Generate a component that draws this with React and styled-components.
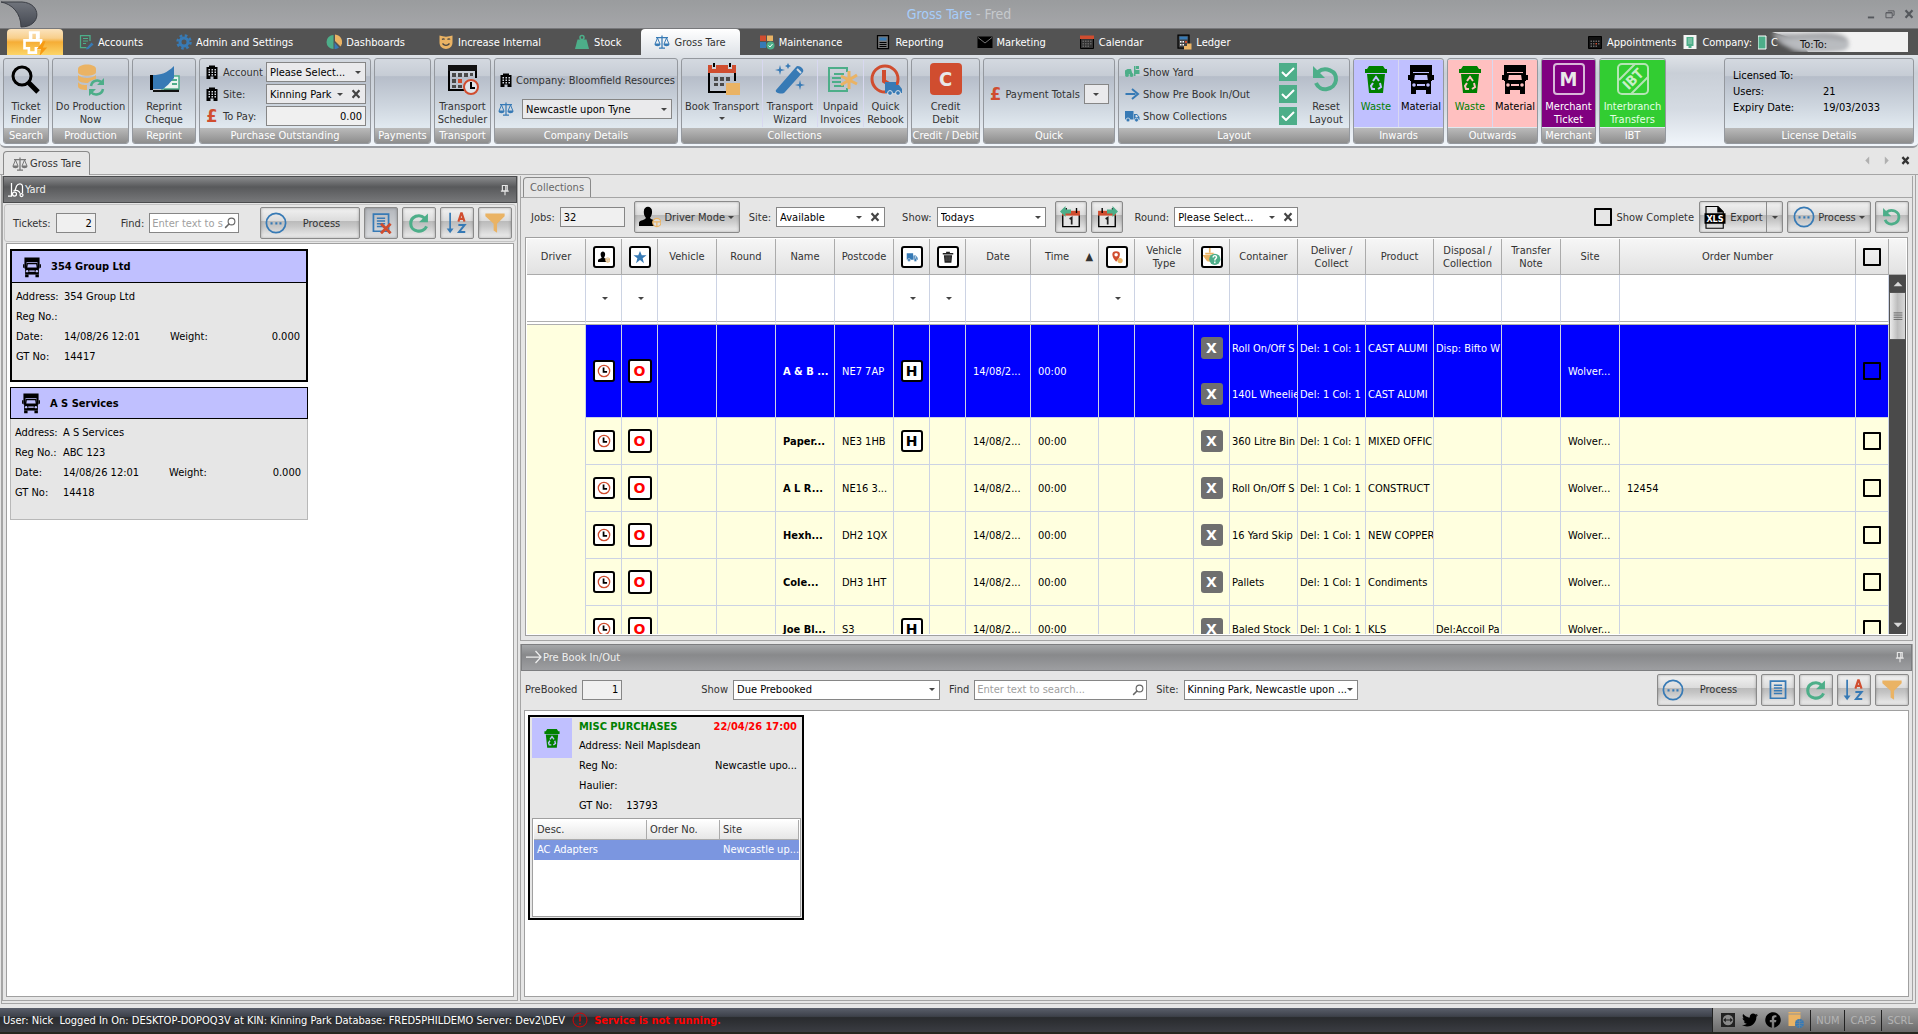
import { useId } from 'react';
import styled, { createGlobalStyle, css } from 'styled-components';
import { FaFacebook, FaTwitter } from 'react-icons/fa';

const BLUE = '#377ab5';
const GREEN = '#4dae89';
const RED = '#d04d2f';
const AMBER = '#eab364';

/* ---------- icons ---------- */

function Svg({ size = 16, box = 32, children }) {
  return (
    <svg width={size} height={size} viewBox={`0 0 ${box} ${box}`} fill='none' aria-hidden='true'>
      {children}
    </svg>
  );
}

const SearchIcon = () => (
  <Svg size={32}>
    <circle cx='12' cy='13' r='9' stroke='#000' strokeWidth='3' />
    <path d='M18 19l10 10' stroke='#000' strokeWidth='5' />
  </Svg>
);

const LensIcon = () => (
  <Svg size={12}>
    <circle cx='20' cy='12' r='9' stroke='#666' strokeWidth='3' />
    <path d='M14 18L3 29' stroke='#666' strokeWidth='4' />
  </Svg>
);

const DatabaseIcon = () => (
  <Svg size={32}>
    <path d='M3 6c0-6 18-6 18 0v3c0 5-18 5-18 0z' fill={AMBER} />
    <path d='M3 12c4 4 14 4 18 0v4c-4 1-7 2-8 4-5 0-10-1-10-4z' fill={AMBER} />
    <path d='M3 19c2 3 6 3 9 3v5c-5 0-9-1-9-4z' fill={AMBER} />
    <path d='M16 23c1-6 8-7 11-3M28 26c-1 6-9 7-12 3' stroke={GREEN} strokeWidth='2.5' />
    <path d='M29 15v7h-7zM14 33v-7h7z' fill={GREEN} />
  </Svg>
);

const ChequeIcon = () => (
  <Svg size={32}>
    <path d='M2 12h3v15H2z' fill='#000' />
    <path d='M5 27h11v-3l3-3h12v8H5z' fill='#111' />
    <path d='M17 13h14v13H14z' fill='#e8f4ee' stroke={GREEN} strokeWidth='1.5' />
    <path d='M21 17h8M24 21h5' stroke={GREEN} strokeWidth='2' />
    <path d='M5 12c8 0 14-2 21-9v12c-5 6-7 8-11 11H5z' fill={BLUE} />
  </Svg>
);

const BuildingIcon = () => (
  <Svg>
    <path d='M10 3h12v3h5v24h-8v-5h-6v5H5V6h5z' fill='#000' />
    <path d='M9 10h3v3H9zM15 10h3v3h-3zM21 10h3v3h-3zM9 15h3v3H9zM15 15h3v3h-3zM21 15h3v3h-3zM9 20h3v3H9zM15 20h3v3h-3zM21 20h3v3h-3z' fill='#d5dae2' />
  </Svg>
);

const SchedulerIcon = () => (
  <Svg size={32}>
    <path d='M29 15V5M2 3v24h15' stroke='#000' strokeWidth='2' />
    <path d='M1 2h29v6H1z' fill='#111' />
    <path d='M5 10h4v4H5zM11 10h4v4h-4zM17 10h4v4h-4zM23 10h3v3h-3zM5 16h4v4H5zM5 22h4v3H5zM11 22h4v3h-4z' fill='#4a4a4a' />
    <path d='M11 16h4v4h-4z' fill={RED} />
    <circle cx='24' cy='24' r='7' fill='#dfe4ea' stroke={RED} strokeWidth='2' />
    <path d='M24 19v6h4' stroke='#000' strokeWidth='2' />
  </Svg>
);

const ScalesIcon = ({ color = BLUE }) => (
  <Svg>
    <path d='M16 3v24M10 28h12M4 7h24' stroke={color} strokeWidth='2.5' />
    <path d='M7 8L2 20h10zM25 8l-5 12h10z' stroke={color} strokeWidth='2' />
    <path d='M1 20h12c0 6-12 6-12 0zM19 20h12c0 6-12 6-12 0z' fill={color} />
  </Svg>
);

const BookIcon = () => (
  <Svg size={32}>
    <path d='M3 10v19h17M29 10v8' stroke='#000' strokeWidth='2' />
    <path d='M2 2h4v4h4V2h12v4h4V2h4v8H2z' fill={RED} />
    <path d='M7 0h2v4H7zM23 0h2v4h-2z' fill='#000' />
    <path d='M8 14h4v4H8zM14 14h4v4h-4zM20 14h4v4h-4zM8 20h4v3H8zM14 20h4v3h-4z' fill='#4a4a4a' />
    <path d='M20 20h14v12H20z' fill={AMBER} />
  </Svg>
);

const WandIcon = () => (
  <Svg size={32}>
    <path d='M2 27L22 4c2-3 9 2 7 5L11 29c-2 3-11 1-9-2z' fill={BLUE} />
    <path d='M23 6l4 4' stroke='#d6dbe2' strokeWidth='2' />
    <path d='M6 2l1 4 4 1-4 1-1 4-1-4-4-1 4-1zM14 0l1 2 2 1-2 1-1 2-1-2-2-1 2-1zM26 17l1 4 4 1-4 1-1 4-1-4-4-1 4-1z' fill={BLUE} />
  </Svg>
);

const InvoiceIcon = () => (
  <Svg size={32}>
    <path d='M22 9V5H4v23h18v-3' stroke={GREEN} strokeWidth='2' />
    <path d='M9 11h10M7 15h9M7 19h9M9 23h10' stroke={GREEN} strokeWidth='2' />
    <path d='M24 8v18M16 13l16 8M32 12l-16 10' stroke={AMBER} strokeWidth='3' />
  </Svg>
);

const RebookIcon = () => (
  <Svg size={32}>
    <circle cx='15' cy='16' r='13' stroke={RED} strokeWidth='3' />
    <path d='M14 7v11l5 3' stroke={RED} strokeWidth='4' />
    <path d='M15 19h11v3h3l3 4v4H15z' fill={BLUE} />
    <circle cx='20' cy='30' r='2.4' fill={BLUE} stroke='#dfe4ea' />
    <circle cx='28' cy='30' r='2.4' fill={BLUE} stroke='#dfe4ea' />
  </Svg>
);

const ForkliftIcon = () => (
  <Svg>
    <path d='M2 20v-7l5-3h7l3 10zM20 4v20h3V4zM23 12h8v8h-8zM24 4h6v6h-6z' fill={GREEN} />
    <circle cx='6' cy='22' r='4' fill={GREEN} />
    <circle cx='15' cy='22' r='4' fill={GREEN} />
  </Svg>
);

const YardIcon = () => (
  <Svg>
    <path d='M7 2v26H0M14 17l3-9c3-5 11-6 12 0v14M11 18c5-3 12-1 13 5' stroke='#fff' strokeWidth='2.5' />
    <circle cx='13' cy='24' r='4' stroke='#fff' strokeWidth='2.5' />
    <circle cx='27' cy='26' r='3' stroke='#fff' strokeWidth='2.5' />
  </Svg>
);

const ArrowIcon = () => (
  <Svg>
    <path d='M3 16h20' stroke={BLUE} strokeWidth='4' />
    <path d='M16 6l12 10-12 10' stroke={BLUE} strokeWidth='4' />
  </Svg>
);

const ThinArrowIcon = () => (
  <Svg>
    <path d='M0 16h30M19 4l11 12-11 12' stroke='#eee' strokeWidth='2.5' />
  </Svg>
);

const TruckIcon = ({ size = 16 }) => (
  <Svg size={size}>
    <path d='M2 6h17v17H2zM20 12h6l5 6v6H20z' fill={BLUE} />
    <path d='M23 14h3l2 4h-5z' fill='#dfe4ea' />
    <circle cx='8' cy='24' r='4' fill={BLUE} stroke='#e6e9ee' strokeWidth='1.5' />
    <circle cx='25' cy='24' r='4' fill={BLUE} stroke='#e6e9ee' strokeWidth='1.5' />
  </Svg>
);

const LorryFront = ({ size = 32, bg = '#c0c0ff' }) => (
  <Svg size={size}>
    <path d='M5 2h22v7H5zM5 2h3v16H5zM24 2h3v16h-3z' fill='#000' />
    <path d='M9 11h14l1 7H8z' stroke='#000' strokeWidth='2' />
    <path d='M6 17h20v10H6z' fill='#000' />
    <path d='M12 21h8v2h-8z' fill={bg} />
    <circle cx='9' cy='22' r='1.8' fill={bg} />
    <circle cx='23' cy='22' r='1.8' fill={bg} />
    <path d='M6 27h5v4H6zM21 27h5v4h-5zM3 12h2v5H3zM27 12h2v5h-2z' fill='#000' />
  </Svg>
);

const BinIcon = ({ size = 32, bg = '#c0c0ff' }) => (
  <Svg size={size}>
    <path d='M9 3h14l2 3H7zM5 6h22v4H5zM7 11h18l-2 19H9z' fill='#008000' />
    <path d='M13 18l3-4 3 4M20 20l1 4-3 2M15 26h-3l-1-3 2-3' stroke={bg} strokeWidth='2' />
  </Svg>
);

const ResetIcon = ({ size = 32 }) => (
  <Svg size={size}>
    <path d='M8 9c7-6 19-1 18 8-1 10-16 13-20 3' stroke={GREEN} strokeWidth='4' />
    <path d='M3 3v12h12z' fill={GREEN} />
  </Svg>
);

const RefreshIcon = () => (
  <Svg size={22}>
    <path d='M24 9C17 2 4 6 4 17c0 12 18 15 23 4' stroke={GREEN} strokeWidth='4.5' />
    <path d='M29 2v13H16z' fill={GREEN} />
  </Svg>
);

const DotsIcon = () => (
  <Svg size={22}>
    <circle cx='16' cy='16' r='14' stroke={BLUE} strokeWidth='2.5' />
    <path d='M8 15h3v3H8zM15 15h3v3h-3zM21 15h3v3h-3z' fill={BLUE} />
  </Svg>
);

const ListIcon = ({ crossed }) => (
  <Svg size={22}>
    <path d='M5 3h22v25H5z' stroke={BLUE} strokeWidth='2.5' />
    <path d='M10 9h12M10 13h12M10 17h12M10 21h12' stroke={BLUE} strokeWidth='2' />
    {crossed && <path d='M16 17l14 14M30 17L16 31' stroke={RED} strokeWidth='4' />}
  </Svg>
);

const SortIcon = () => (
  <Svg size={22}>
    <path d='M6 1v26' stroke={BLUE} strokeWidth='2.5' />
    <path d='M1 24h10l-5 7z' fill={BLUE} />
    <path d='M18 14l4-12h1l4 12M19 10h7' stroke={RED} strokeWidth='3' />
    <path d='M18 19h9l-8 10h9' stroke={BLUE} strokeWidth='3' />
  </Svg>
);

const FunnelIcon = () => (
  <Svg size={22}>
    <path d='M2 2h28v4L19 17v13l-5-3V17L2 6z' fill={AMBER} />
  </Svg>
);

const DriverIcon = ({ size = 22 }) => (
  <Svg size={size}>
    <path d='M7 8c0-9 12-9 12 0 0 4-1 7-3 9 1 3 8 3 9 6v6H0v-5c1-4 9-3 10-7-2-2-3-5-3-8z' fill='#000' />
    <circle cx='26' cy='24' r='6' fill='#ddd' stroke={AMBER} strokeWidth='1.8' />
    <path d='M20 23h12M26 24v6' stroke={AMBER} strokeWidth='1.8' />
  </Svg>
);

const DayIcon = ({ forward }) => (
  <Svg size={22}>
    <path d='M4 12v18h24V12' stroke='#000' strokeWidth='2' fill='#e4e4e4' />
    <path d='M3 7h26v7H3z' fill={RED} />
    <path d='M8 3h2v7H8zM23 3h2v7h-2z' fill='#000' />
    <path d='M14 19l3-2v10' stroke='#222' strokeWidth='2.5' />
    <path d={forward ? 'M16 5h8V0l8 8-8 8v-5h-8z' : 'M16 5H8V0L0 8l8 8v-5h8z'} fill={GREEN} />
  </Svg>
);

const XlsIcon = () => (
  <Svg size={24}>
    <path d='M4 2h16l7 7v22H4z' stroke='#000' strokeWidth='1.5' />
    <path d='M19 1v9h9zM2 11h28v14H2z' fill='#000' />
    <text x='16' y='23' fill='#fff' fontSize='12' fontWeight='700' textAnchor='middle'>XLS</text>
  </Svg>
);

const ClockIcon = () => (
  <Svg size={14}>
    <circle cx='16' cy='16' r='13' stroke={RED} strokeWidth='3' />
    <path d='M15 8v10h8' stroke='#000' strokeWidth='4' />
  </Svg>
);

const StarIcon = () => (
  <Svg size={14}>
    <path d='M16 2l4 10h11l-9 7 3 11-9-7-9 7 3-11-9-7h11z' fill={BLUE} />
  </Svg>
);

const TrashIcon = () => (
  <Svg size={12}>
    <path d='M2 5h9V2h10v3h9v4H2zM5 11h22l-2 20H7z' fill='#222' />
    <path d='M11 14v13M16 14v13M21 14v13' stroke='#666' strokeWidth='2' />
  </Svg>
);

const PinMapIcon = () => (
  <Svg size={14}>
    <path d='M14 3c-12 0-11 12 0 24C25 15 26 3 14 3z' fill={RED} />
    <circle cx='14' cy='11' r='4' fill='#fff' />
    <circle cx='23' cy='24' r='6' fill={AMBER} />
  </Svg>
);

const QueryIcon = () => (
  <Svg size={18}>
    <path d='M12 0v8M4 10h15M2 14h17v10L8 22z' stroke={AMBER} strokeWidth='3' fill={AMBER} />
    <circle cx='21' cy='20' r='10' fill={GREEN} />
    <path d='M18 17c0-5 7-4 6 0-1 2-3 2-3 5M21 24v3' stroke='#fff' strokeWidth='2.5' />
  </Svg>
);

const PushPinIcon = () => (
  <Svg size={12}>
    <path d='M9 4h13v14H9zM5 19h21M16 19v11M18 4v14' stroke='#e6e6e6' strokeWidth='3' />
  </Svg>
);

const AccountsIcon = () => (
  <Svg>
    <path d='M24 14V3H5v24h12' stroke={GREEN} strokeWidth='2.5' />
    <path d='M10 9h10M10 14h10M10 19h6' stroke={GREEN} strokeWidth='2' />
    <path d='M17 28l10-11 4 4-10 9-5 1z' fill={BLUE} />
  </Svg>
);

const GearIcon = () => (
  <Svg>
    <circle cx='16' cy='16' r='8' stroke={BLUE} strokeWidth='6' />
    <circle cx='16' cy='16' r='13' stroke={BLUE} strokeWidth='5' strokeDasharray='5.2 5' />
  </Svg>
);

const PieIcon = () => (
  <Svg>
    <path d='M15 2a14 14 0 0 0 0 28z' fill={GREEN} />
    <path d='M18 1a15 15 0 0 1 11 24L18 14z' fill={AMBER} />
    <path d='M17 17l9 10c-3 3-6 3-9 3z' fill={BLUE} />
  </Svg>
);

const MaskIcon = () => (
  <Svg>
    <path d='M3 3c9 3 17 3 26 0v14c0 17-26 17-26 0z' fill={AMBER} />
    <path d='M8 11c2-2 4-2 5 0M19 11c2-2 4-2 5 0M9 19c4 5 10 5 14 0' stroke='#444' strokeWidth='2.5' />
  </Svg>
);

const WeightIcon = () => (
  <Svg>
    <circle cx='16' cy='7' r='4' stroke={GREEN} strokeWidth='3' />
    <path d='M7 11h18l5 19H2z' fill={GREEN} />
  </Svg>
);

const TilesIcon = () => (
  <Svg>
    <path d='M2 3h12v11H2z' fill={RED} />
    <path d='M16 3h12v11H16z' fill={AMBER} />
    <path d='M2 16h12v12H2z' fill={BLUE} />
    <circle cx='23' cy='23' r='8' fill={GREEN} />
    <path d='M19 23l3 3 5-6' stroke='#fff' strokeWidth='2' />
  </Svg>
);

const ReportIcon = () => (
  <Svg>
    <path d='M5 3h22v26H5z' stroke='#000' strokeWidth='2.5' fill='#777' />
    <path d='M9 7h14v6H9z' fill={BLUE} />
    <path d='M9 17h14M9 21h14M9 25h14' stroke='#000' strokeWidth='2' />
  </Svg>
);

const MailIcon = () => (
  <Svg>
    <path d='M1 5h30v23H1z' fill='#000' />
    <path d='M2 7l14 11L30 7' stroke='#999' strokeWidth='1.5' />
  </Svg>
);

const CalendarIcon = ({ dark }) => (
  <Svg>
    <path d='M3 5h26v24H3z' fill={dark ? '#111' : '#333'} stroke='#000' strokeWidth='2' />
    {!dark && <path d='M2 3h28v7H2z' fill={RED} />}
    <path d='M7 13h3v3H7zM12 13h3v3h-3zM17 13h3v3h-3zM22 13h3v3h-3zM7 18h3v3H7zM12 18h3v3h-3zM22 18h3v3h-3zM7 23h3v3H7zM12 23h3v3h-3zM17 23h3v3h-3z' fill='#666' />
    <path d='M17 18h3v3h-3z' fill={dark ? RED : '#666'} />
  </Svg>
);

const LedgerIcon = () => (
  <Svg>
    <path d='M4 2h22v26H4z' stroke='#000' strokeWidth='2.5' fill='#444' />
    <path d='M7 5h16v6H7z' fill={BLUE} />
    <path d='M8 14h3v3H8zM13 14h3v3h-3zM8 20h3v3H8zM13 20h3v3h-3z' fill='#fff' />
    <path d='M18 14h4v4h-4z' fill={RED} />
    <path d='M16 24h6v-5h9v12H16z' fill={AMBER} />
  </Svg>
);

const CompanyIcon = () => (
  <Svg>
    <path d='M3 2h26v28H3z' fill='#f4f4f4' />
    <path d='M9 6h14v18h-4v4h-6v-4H9z' fill={GREEN} />
    <path d='M12 10h8M12 14h8M12 18h8' stroke='#b9dfcf' strokeWidth='1.5' />
  </Svg>
);

const FileTabIcon = () => (
  <Svg size={28}>
    <path d='M9 4h11v7M4 13h19v9h-6v5H9v-5H4z' stroke='#fff' strokeWidth='3' />
    <path d='M9 4h4v9H9zM17 4h3v8h-3z' fill='#fff' />
    <path d='M25 14l-7 9h5l-2 8 9-10h-5l3-7z' fill='#f79a12' />
  </Svg>
);

const AlertIcon = () => (
  <Svg>
    <circle cx='16' cy='16' r='14' stroke='#d00' strokeWidth='2' />
    <path d='M16 7v12M16 22v3' stroke='#d00' strokeWidth='3' />
  </Svg>
);

const RemoteIcon = () => (
  <Svg size={14}>
    <path d='M0 0h32v32H0z' fill='#222' />
    <circle cx='16' cy='16' r='12' fill='#8a8a8a' />
    <path d='M5 16l6-5v4h10v-4l6 5-6 5v-4H11v4z' fill='#222' />
  </Svg>
);

const WebFormIcon = () => (
  <Svg>
    <path d='M1 0h24v3H1zM1 5h24v8l-8 6-3 9H1z' fill={AMBER} />
    <circle cx='23' cy='23' r='9' fill={BLUE} />
    <path d='M14 23h18M23 14v18M17 17c4 3 8 3 12 0M17 29c4-3 8-3 12 0' stroke='#8a8a8a' strokeWidth='1' />
  </Svg>
);

const Tick = () => (
  <svg width='14' height='10' viewBox='0 0 14 10' fill='none' aria-hidden='true'>
    <path d='M1 5l4 4 8-8' stroke='#fff' strokeWidth='2' />
  </svg>
);

const CrossIcon = ({ size = 10, color = '#444', width = 7 }) => (
  <Svg size={size}>
    <path d='M5 4l22 24M27 4L5 28' stroke={color} strokeWidth={width} />
  </Svg>
);

/* ---------- data ---------- */

const menuItems = [
  ['Accounts', AccountsIcon],
  ['Admin and Settings', GearIcon],
  ['Dashboards', PieIcon],
  ['Increase Internal', MaskIcon],
  ['Stock', WeightIcon],
  ['Gross Tare', ScalesIcon],
  ['Maintenance', TilesIcon],
  ['Reporting', ReportIcon],
  ['Marketing', MailIcon],
  ['Calendar', CalendarIcon],
  ['Ledger', LedgerIcon],
];

const tickets = [
  { name: '354 Group Ltd', reg: '', date: '14/08/26 12:01', weight: '0.000', gt: '14417', selected: true },
  { name: 'A S Services', reg: 'ABC 123', date: '14/08/26 12:01', weight: '0.000', gt: '14418' },
];

const columns = [
  { label: 'Driver', width: 59 },
  { icon: <DriverIcon size={12} />, name: 'Driver status', width: 36, filter: true },
  { icon: <StarIcon />, name: 'Priority', width: 36, filter: true },
  { label: 'Vehicle', width: 59 },
  { label: 'Round', width: 59 },
  { label: 'Name', width: 59 },
  { label: 'Postcode', width: 59 },
  { icon: <TruckIcon size={12} />, name: 'Haulage', width: 36, filter: true },
  { icon: <TrashIcon />, name: 'Waste', width: 36, filter: true },
  { label: 'Date', width: 65 },
  { label: 'Time', width: 68, sorted: true },
  { icon: <PinMapIcon />, name: 'Location', width: 36, filter: true },
  { label: 'Vehicle Type', width: 59 },
  { icon: <QueryIcon />, name: 'Query', width: 36 },
  { label: 'Container', width: 68 },
  { label: 'Deliver / Collect', width: 68 },
  { label: 'Product', width: 68 },
  { label: 'Disposal / Collection', width: 68 },
  { label: 'Transfer Note', width: 59 },
  { label: 'Site', width: 59 },
  { label: 'Order Number' },
];

const jobs = [
  {
    name: 'A & B ...', postcode: 'NE7 7AP', haulage: true, order: '', selected: true,
    lines: [
      ['Roll On/Off S', 'CAST ALUMI', 'Disp: Bifto W'],
      ['140L Wheelie', 'CAST ALUMI', ''],
    ],
  },
  { name: 'Paper...', postcode: 'NE3 1HB', haulage: true, order: '', lines: [['360 Litre Bin', 'MIXED OFFIC', '']] },
  { name: 'A L R...', postcode: 'NE16 3...', order: '12454', lines: [['Roll On/Off S', 'CONSTRUCT', '']] },
  { name: 'Hexh...', postcode: 'DH2 1QX', order: '', lines: [['16 Yard Skip', 'NEW COPPER', '']] },
  { name: 'Cole...', postcode: 'DH3 1HT', order: '', lines: [['Pallets', 'Condiments', '']] },
  { name: 'Joe Bl...', postcode: 'S3', haulage: true, order: '', lines: [['Baled Stock', 'KLS', 'Del:Accoil Pa']] },
];

/* ---------- small controls ---------- */

function Select({ id, value, width, clear, plain, label }) {
  return (
    <SelectBox $width={width} $plain={plain}>
      <select id={id} defaultValue={value} aria-label={label}>
        <option>{value}</option>
      </select>
      <Caret />
      {clear && <ClearButton aria-label='Clear'><CrossIcon /></ClearButton>}
    </SelectBox>
  );
}

function LabelledSelect({ label, ...rest }) {
  const id = useId();
  return (
    <Field>
      <label htmlFor={id}>{label}</label>
      <Select id={id} {...rest} />
    </Field>
  );
}

function CountField({ label, value, width, left }) {
  const id = useId();
  return (
    <Field>
      <label htmlFor={id}>{label}</label>
      <TextInput id={id} $width={width} $left={left} value={value} readOnly />
    </Field>
  );
}

function FindField({ label, placeholder, width }) {
  const id = useId();
  return (
    <Field>
      <label htmlFor={id}>{label}</label>
      <FindBox $width={width}>
        <input id={id} placeholder={placeholder} />
        <LensIcon />
      </FindBox>
    </Field>
  );
}

function RibbonGroup({ caption, width, last, children }) {
  return (
    <Group $width={width} $last={last}>
      <div className='content'>{children}</div>
      <div className='caption'>{caption}</div>
    </Group>
  );
}

/* ---------- regions ---------- */

function TitleBar() {
  return (
    <TitleBarStyle>
      <svg width='38' height='28' viewBox='0 0 38 28' aria-hidden='true'>
        <defs>
          <linearGradient id='orb' x1='0' y1='0' x2='0' y2='1'>
            <stop offset='0' stopColor='#70747c' />
            <stop offset='1' stopColor='#454952' />
          </linearGradient>
        </defs>
        <path d='M1 2h21c20 1 20 25-1 25C21 13 12 4 1 2z' fill='url(#orb)' stroke='#3b3e45' />
      </svg>
      <h1>
        <span>Gross Tare</span> - Fred
      </h1>
      <div className='window-buttons'>
        <button aria-label='Minimise'>
          <Svg size={10}><path d='M6 27h20' stroke='#55585d' strokeWidth='6' /></Svg>
        </button>
        <button aria-label='Restore'>
          <Svg size={10}><path d='M3 12h20v16H3zM3 12h20M9 6h20v14h-5' stroke='#55585d' strokeWidth='3' /></Svg>
        </button>
        <button aria-label='Close'>
          <CrossIcon color='#55585d' />
        </button>
      </div>
    </TitleBarStyle>
  );
}

function MenuBar() {
  return (
    <MenuBarStyle>
      <FileTab aria-label='File'>
        <FileTabIcon />
      </FileTab>
      <nav>
        {menuItems.map(([label, Icon]) => (
          <MenuTab key={label} href='#' $active={label === 'Gross Tare'}>
            <Icon />
            {label}
          </MenuTab>
        ))}
      </nav>
      <div className='account'>
        <MenuLink href='#'>
          <CalendarIcon dark />
          Appointments
        </MenuLink>
        <MenuLink href='#'>
          <CompanyIcon />
          Company:
        </MenuLink>
        <CompanyBox>
          <svg width='150' height='20' viewBox='0 0 150 20' aria-hidden='true'>
            <defs>
              <filter id='smear' x='-10%' y='-20%' width='120%' height='140%'>
                <feGaussianBlur stdDeviation='2' />
              </filter>
            </defs>
            <path d='M0 0h14l26 8 10 12H0z' fill='#535353' />
            <path d='M14 1c30 2 50-3 66 1 14 4 12 10 2 14-14 4-30 2-46 3C26 12 20 12 14 1z' fill='#a4a6a9' filter='url(#smear)' />
            <path d='M22 9c20-4 46-4 66 0 6 4 2 8-4 10H44z' fill='#b9bcc0' filter='url(#smear)' />
            <path d='M0 4h8v13H0z' fill={GREEN} stroke='#fff' />
            <text x='13' y='14' fill='#fff' fontSize='11'>C</text>
            <text x='42' y='16' fill='#111' fontSize='11'>To:To:</text>
          </svg>
        </CompanyBox>
      </div>
    </MenuBarStyle>
  );
}

function Ribbon() {
  return (
    <RibbonStyle>
      <RibbonGroup caption='Search' width={46}>
        <BigButton><SearchIcon />Ticket Finder</BigButton>
      </RibbonGroup>
      <RibbonGroup caption='Production' width={77}>
        <BigButton><DatabaseIcon />Do Production Now</BigButton>
      </RibbonGroup>
      <RibbonGroup caption='Reprint' width={64}>
        <BigButton $narrow><ChequeIcon />Reprint Cheque</BigButton>
      </RibbonGroup>
      <RibbonGroup caption='Purchase Outstanding' width={172}>
        <FormGrid>
          <BuildingIcon />
          <label htmlFor='account'>Account</label>
          <Select id='account' value='Please Select...' width={100} plain />
          <BuildingIcon />
          <label htmlFor='pay-site'>Site:</label>
          <Select id='pay-site' value='Kinning Park' width={100} clear plain />
          <Pound>£</Pound>
          <label htmlFor='to-pay'>To Pay:</label>
          <TextInput id='to-pay' $width={100} value='0.00' readOnly />
        </FormGrid>
      </RibbonGroup>
      <RibbonGroup caption='Payments' width={57} />
      <RibbonGroup caption='Transport' width={57}>
        <BigButton><SchedulerIcon />Transport Scheduler</BigButton>
      </RibbonGroup>
      <RibbonGroup caption='Company Details' width={184}>
        <CompanyDetails>
          <div>
            <BuildingIcon />
            Company: Bloomfield Resources
          </div>
          <div>
            <ScalesIcon />
            <Select value='Newcastle upon Tyne' label='Weighbridge' width={150} plain />
          </div>
        </CompanyDetails>
      </RibbonGroup>
      <RibbonGroup caption='Collections' width={227}>
        <BigButton $width={80}>
          <BookIcon />
          Book Transport
          <Caret />
        </BigButton>
        <BigButton $width={55}><WandIcon />Transport Wizard</BigButton>
        <BigButton $width={46}><InvoiceIcon />Unpaid Invoices</BigButton>
        <BigButton $width={44}><RebookIcon />Quick Rebook</BigButton>
      </RibbonGroup>
      <RibbonGroup caption='Credit / Debit' width={69}>
        <BigButton $narrow>
          <Monogram $color={RED}>C</Monogram>
          Credit Debit
        </BigButton>
      </RibbonGroup>
      <RibbonGroup caption='Quick' width={132}>
        <QuickRow>
          <Pound>£</Pound>
          Payment Totals
          <Select value='' label='Payment Totals' width={25} plain />
        </QuickRow>
      </RibbonGroup>
      <RibbonGroup caption='Layout' width={232}>
        <ToggleList>
          {[
            ['Show Yard', <ForkliftIcon key='i' />],
            ['Show Pre Book In/Out', <ArrowIcon key='i' />],
            ['Show Collections', <TruckIcon key='i' />],
          ].map(([label, icon]) => (
            <label key={label}>
              {icon}
              <span>{label}</span>
              <input type='checkbox' defaultChecked />
              <i><Tick /></i>
            </label>
          ))}
        </ToggleList>
        <BigButton $width={46}><ResetIcon />Reset Layout</BigButton>
      </RibbonGroup>
      <RibbonGroup caption='Inwards' width={91}>
        <BigButton $bg='#c0c0ff' $color='#008000'><BinIcon />Waste</BigButton>
        <BigButton $bg='#c0c0ff' $color='#000'><LorryFront />Material</BigButton>
      </RibbonGroup>
      <RibbonGroup caption='Outwards' width={91}>
        <BigButton $bg='#ffc0c0' $color='#008000'><BinIcon bg='#ffc0c0' />Waste</BigButton>
        <BigButton $bg='#ffc0c0' $color='#000'><LorryFront bg='#ffc0c0' />Material</BigButton>
      </RibbonGroup>
      <RibbonGroup caption='Merchant' width={55}>
        <BigButton $bg='#800080' $color='#fff'>
          <Monogram $outline>M</Monogram>
          Merchant Ticket
        </BigButton>
      </RibbonGroup>
      <RibbonGroup caption='IBT' width={67}>
        <BigButton $bg='#32cd32' $color='#e4ffe4'>
          <Svg size={32}>
            <rect x='1' y='1' width='30' height='30' rx='4' stroke='#b5e5b5' strokeWidth='2' />
            <path d='M2 17L18 1M14 31l17-17' stroke='#b5e5b5' strokeWidth='2' />
            <text x='16' y='21' fill='#c8efc8' fontSize='14' fontWeight='700' textAnchor='middle' transform='rotate(-45 16 16)'>IBT</text>
          </Svg>
          Interbranch Transfers
        </BigButton>
      </RibbonGroup>
      <RibbonGroup caption='License Details' width={190} last>
        <License>
          <dt>Licensed To:</dt>
          <dd />
          <dt>Users:</dt>
          <dd>21</dd>
          <dt>Expiry Date:</dt>
          <dd>19/03/2033</dd>
        </License>
      </RibbonGroup>
    </RibbonStyle>
  );
}

function YardPanel() {
  return (
    <YardStyle>
      <PanelHeader $dark>
        <YardIcon />
        <h2>Yard</h2>
        <PushPinIcon />
      </PanelHeader>
      <Toolbar $framed>
        <CountField label='Tickets:' value='2' width={40} />
        <Spacer $width={12} />
        <FindField label='Find:' placeholder='Enter text to s' width={90} />
        <Push />
        <ProcessButton $width={100}><DotsIcon /><span>Process</span></ProcessButton>
        <IconButton aria-label='Clear list' $pressed><ListIcon crossed /></IconButton>
        <IconButton aria-label='Refresh'><RefreshIcon /></IconButton>
        <IconButton aria-label='Sort'><SortIcon /></IconButton>
        <IconButton aria-label='Filter'><FunnelIcon /></IconButton>
      </Toolbar>
      <ListArea>
        {tickets.map((t) => (
          <TicketCard key={t.gt} $selected={t.selected}>
            <header>
              <LorryFront size={22} />
              <h3>{t.name}</h3>
            </header>
            <dl>
              <dt>Address:</dt>
              <dd className='wide'>{t.name}</dd>
              <dt>Reg No.:</dt>
              <dd className='wide'>{t.reg}</dd>
              <dt>Date:</dt>
              <dd>{t.date}</dd>
              <dt>Weight:</dt>
              <dd className='number'>{t.weight}</dd>
              <dt>GT No:</dt>
              <dd className='wide'>{t.gt}</dd>
            </dl>
          </TicketCard>
        ))}
      </ListArea>
    </YardStyle>
  );
}

function JobRow({ job, first }) {
  return (
    <JobRowStyle $selected={job.selected} $lines={job.lines.length}>
      {first && <td className='driver' rowSpan={jobs.length} />}
      <td className='icon'><Badge><ClockIcon /></Badge></td>
      <td className='icon'><Badge $large>O</Badge></td>
      <td />
      <td />
      <td className='inset'><b>{job.name}</b></td>
      <td className='inset'>{job.postcode}</td>
      <td className='icon'>{job.haulage && <Badge>H</Badge>}</td>
      <td />
      <td className='inset'>14/08/2...</td>
      <td className='inset'>00:00</td>
      <td />
      <td />
      <td className='icon'>
        {job.lines.map((l, i) => (
          <Line key={i} $center><GreyBadge>X</GreyBadge></Line>
        ))}
      </td>
      <td>{job.lines.map((l, i) => <Line key={i}>{l[0]}</Line>)}</td>
      <td>{job.lines.map((l, i) => <Line key={i}>Del: 1 Col: 1</Line>)}</td>
      <td>{job.lines.map((l, i) => <Line key={i}>{l[1]}</Line>)}</td>
      <td>{job.lines.map((l, i) => <Line key={i}>{l[2]}</Line>)}</td>
      <td />
      <td className='inset'>Wolver...</td>
      <td className='inset'>{job.order}</td>
      <td className='icon'><CheckBox type='checkbox' aria-label={`Select ${job.name}`} /></td>
    </JobRowStyle>
  );
}

function CollectionsPanel() {
  return (
    <CollectionsStyle>
      <InnerTabs>
        <button>Collections</button>
      </InnerTabs>
      <Toolbar $inset>
        <CountField label='Jobs:' value='32' width={65} left />
        <GradientButton $width={106}>
          <DriverIcon />
          Driver Mode
          <Caret />
        </GradientButton>
        <LabelledSelect label='Site:' value='Available' width={109} clear />
        <Spacer $width={4} />
        <LabelledSelect label='Show:' value='Todays' width={109} />
        <SquareButton aria-label='Previous day'><DayIcon /></SquareButton>
        <SquareButton aria-label='Next day'><DayIcon forward /></SquareButton>
        <Spacer $width={4} />
        <LabelledSelect label='Round:' value='Please Select...' width={124} clear />
        <Push />
        <CheckLabel>
          <CheckBox type='checkbox' />
          Show Complete
        </CheckLabel>
        <SplitButton>
          <button><XlsIcon />Export</button>
          <button aria-label='Export options'><Caret /></button>
        </SplitButton>
        <GradientButton $width={84}>
          <DotsIcon />
          Process
          <Caret />
        </GradientButton>
        <IconButton aria-label='Reset'><ResetIcon size={22} /></IconButton>
      </Toolbar>
      <GridFrame>
        <div className='table-area'>
          <JobTable>
            <colgroup>
              {columns.map((c, i) => <col key={i} width={c.width} />)}
              <col width='33' />
            </colgroup>
            <thead>
              <tr>
                {columns.map((c) => (
                  <th key={c.label || c.name} aria-label={c.name}>
                    {c.icon ? <Badge>{c.icon}</Badge> : c.sorted ? <SortedHead>{c.label}<span>▲</span></SortedHead> : c.label}
                  </th>
                ))}
                <th><CheckBox type='checkbox' aria-label='Select all' /></th>
              </tr>
              <tr className='filters'>
                {columns.map((c, i) => <td key={i}>{c.filter && <Caret />}</td>)}
                <td />
              </tr>
            </thead>
            <tbody>
              {jobs.map((job, i) => <JobRow key={job.name} job={job} first={i === 0} />)}
            </tbody>
          </JobTable>
        </div>
        <ScrollColumn>
          <div className='corner' />
          <button aria-label='Scroll up'>
            <Svg size={10}><path d='M2 23L16 9l14 14z' fill='#d8d8d8' /></Svg>
          </button>
          <div className='thumb'>
            <Svg size={10}><path d='M2 6h28M2 13h28M2 20h28M2 27h28' stroke='#666' strokeWidth='3' /></Svg>
          </div>
          <Push />
          <button aria-label='Scroll down'>
            <Svg size={10}><path d='M2 9l14 14L30 9z' fill='#d8d8d8' /></Svg>
          </button>
        </ScrollColumn>
      </GridFrame>
    </CollectionsStyle>
  );
}

function PreBookPanel() {
  return (
    <PreBookStyle>
      <PanelHeader>
        <ThinArrowIcon />
        <h2>Pre Book In/Out</h2>
        <PushPinIcon />
      </PanelHeader>
      <Toolbar>
        <CountField label='PreBooked' value='1' width={40} />
        <Spacer $width={66} />
        <LabelledSelect label='Show' value='Due Prebooked' width={207} />
        <FindField label='Find' placeholder='Enter text to search...' width={173} />
        <LabelledSelect label='Site:' value='Kinning Park, Newcastle upon ...' width={174} />
        <Push />
        <ProcessButton $width={100}><DotsIcon /><span>Process</span></ProcessButton>
        <IconButton aria-label='List'><ListIcon /></IconButton>
        <IconButton aria-label='Refresh'><RefreshIcon /></IconButton>
        <IconButton aria-label='Sort'><SortIcon /></IconButton>
        <IconButton aria-label='Filter'><FunnelIcon /></IconButton>
      </Toolbar>
      <ListArea>
        <BookingCard>
          <div className='top'>
            <div className='type'><BinIcon size={22} /></div>
            <div className='details'>
              <p className='heading'>
                <strong>MISC PURCHASES</strong>
                <time>22/04/26 17:00</time>
              </p>
              <p>Address: Neil Maplsdean</p>
              <p><span>Reg No:</span><span>Newcastle upo...</span></p>
              <p>Haulier:</p>
              <p className='gt'><span>GT No:</span><span>13793</span></p>
            </div>
          </div>
          <div className='lines'>
            <table>
              <colgroup>
                <col width='113' />
                <col width='73' />
                <col />
              </colgroup>
              <thead>
                <tr><th>Desc.</th><th>Order No.</th><th>Site</th></tr>
              </thead>
              <tbody>
                <tr><td>AC Adapters</td><td /><td>Newcastle up...</td></tr>
              </tbody>
            </table>
          </div>
        </BookingCard>
      </ListArea>
    </PreBookStyle>
  );
}

function StatusBar() {
  return (
    <StatusBarStyle>
      <span className='session'>
        User: Nick&nbsp; Logged In On: DESKTOP-DOPOQ3V at KIN: Kinning Park Database: FRED5PHILDEMO Server: Dev2\DEV
      </span>
      <AlertIcon />
      <strong>Service is not running.</strong>
      <div className='tray'>
        <div className='links'>
          <a href='#' aria-label='Remote support'><RemoteIcon /></a>
          <a href='#' aria-label='Twitter'><FaTwitter size={16} /></a>
          <a href='#' aria-label='Facebook'><FaFacebook size={16} /></a>
          <a href='#' aria-label='Website'><WebFormIcon /></a>
        </div>
        <span>NUM</span>
        <span>CAPS</span>
        <span>SCRL</span>
      </div>
    </StatusBarStyle>
  );
}

function App() {
  return (
    <>
      <GlobalStyle />
      <Shell>
        <TitleBar />
        <MenuBar />
        <Ribbon />
        <DocumentTabs>
          <button className='tab'>
            <ScalesIcon color='#777' />
            Gross Tare
          </button>
          <div className='controls'>
            <button aria-label='Previous tab' disabled>
              <Svg size={9}><path d='M22 2v28L8 16z' fill='#b0b0b0' /></Svg>
            </button>
            <button aria-label='Next tab' disabled>
              <Svg size={9}><path d='M10 2v28l14-14z' fill='#b0b0b0' /></Svg>
            </button>
            <button aria-label='Close tab'>
              <CrossIcon size={9} color='#333' width={8} />
            </button>
          </div>
        </DocumentTabs>
        <Workspace>
          <YardPanel />
          <div className='right'>
            <CollectionsPanel />
            <PreBookPanel />
          </div>
        </Workspace>
        <StatusBar />
      </Shell>
    </>
  );
}

export default App;

/* ---------- styles ---------- */

const GlobalStyle = createGlobalStyle`
  * {
    box-sizing: border-box;
  }

  body {
    margin: 0;
    background: #e6e6e6;
  }

  body, button, input, select {
    font-family: 'DejaVu Sans Condensed', 'DejaVu Sans', sans-serif;
    font-size: 11px;
    color: #333;
  }

  h1, h2, h3, p, dl, dd {
    margin: 0;
    font-size: 11px;
    font-weight: 400;
  }

  button {
    padding: 0;
    border: none;
    background: none;
  }

  a {
    color: inherit;
    text-decoration: none;
  }

  svg {
    flex: none;
    display: block;
  }
`;

const steel = css`
  background: linear-gradient(#f2f2f2 0%, #dcdcdc 42%, #bababa 43%, #c6c6c6 60%, #efefef 100%);
  border: 1px solid #8a8a8a;
  border-radius: 2px;
  box-shadow: inset 0 0 3px rgba(0, 0, 0, 0.3);
`;

const Shell = styled.div`
  display: flex;
  flex-direction: column;
  height: 100vh;
  overflow: hidden;
`;

const Spacer = styled.div`
  flex: none;
  width: ${(p) => p.$width}px;
`;

const Push = styled.div`
  flex: 1;
`;

const Caret = styled.span`
  flex: none;
  width: 0;
  height: 0;
  border: 3px solid transparent;
  border-top-color: #444;
  border-bottom: none;
`;

const Field = styled.div`
  display: flex;
  align-items: center;
  gap: 5px;
  white-space: nowrap;
`;

const TextInput = styled.input`
  width: ${(p) => p.$width}px;
  height: 20px;
  padding: 0 3px;
  border: 1px solid #868686;
  background: #f0f0f0;
  color: #000;
  text-align: ${(p) => (p.$left ? 'left' : 'right')};
`;

const SelectBox = styled.div`
  display: flex;
  align-items: center;
  width: ${(p) => p.$width}px;
  height: 20px;
  padding-right: ${(p) => (p.$width < 30 ? 9 : 4)}px;
  border: 1px solid #868686;
  background: ${(p) => (p.$plain ? '#eaeaec' : '#fff')};

  select {
    flex: 1;
    min-width: 0;
    padding: 0 0 0 3px;
    appearance: none;
    border: none;
    background: none;
    color: #000;
  }
`;

const ClearButton = styled.button`
  padding-left: 8px;
`;

const FindBox = styled.div`
  display: flex;
  align-items: center;
  width: ${(p) => p.$width}px;
  height: 20px;
  padding-right: 2px;
  border: 1px solid #868686;
  background: #fff;

  input {
    flex: 1;
    min-width: 0;
    padding: 0 0 0 2px;
    border: none;
    background: none;
    outline: none;
  }

  input::placeholder {
    color: #a0a0a0;
  }
`;

const CheckBox = styled.input`
  appearance: none;
  display: block;
  width: 18px;
  height: 18px;
  margin: 0;
  border: 2px solid #000;
  border-radius: 1px;
`;

const TitleBarStyle = styled.header`
  flex: none;
  display: grid;
  grid-template-columns: 1fr auto 1fr;
  align-items: center;
  height: 29px;
  background: linear-gradient(#9a9c9e, #a5a6a9);
  border-bottom: 1px solid #77787b;

  h1 {
    font-size: 14px;
    color: #c6c9cd;

    span {
      color: #a6cdfb;
    }
  }

  .window-buttons {
    display: flex;
    justify-content: flex-end;
    gap: 9px;
    padding-right: 4px;
  }
`;

const MenuBarStyle = styled.div`
  flex: none;
  display: flex;
  height: 26px;
  padding-left: 7px;
  background: #535353;

  nav {
    display: flex;
    gap: 6px;
    padding-left: 2px;
  }

  .account {
    display: flex;
    align-items: center;
    gap: 6px;
    margin-left: auto;
    padding-right: 10px;
  }
`;

const FileTab = styled.button`
  display: flex;
  justify-content: center;
  width: 56px;
  overflow: hidden;
  border-radius: 4px 4px 0 0;
  background: linear-gradient(#fbe3bd 0%, #f8cf8c 35%, #f5ad36 50%, #fcd568 100%);
`;

const MenuTab = styled.a`
  display: flex;
  align-items: center;
  gap: 4px;
  padding: 0 14px 0 13px;
  border-radius: 4px 4px 0 0;
  color: ${(p) => (p.$active ? '#333' : '#fff')};
  background: ${(p) => (p.$active ? 'linear-gradient(#fff, #dfe3e8)' : 'none')};
  white-space: nowrap;
`;

const MenuLink = styled.a`
  display: flex;
  align-items: center;
  gap: 4px;
  color: #fff;
  white-space: nowrap;
`;

const CompanyBox = styled.div`
  width: 150px;
  height: 20px;
  background: #f2f2f2;
`;

const RibbonStyle = styled.section`
  flex: none;
  display: flex;
  gap: 3px;
  height: 93px;
  padding: 3px 4px 2px 3px;
  border: solid #9a9da2;
  border-width: 0 0 2px;
  border-radius: 0 0 5px 5px;
  background: linear-gradient(#dfe3e8, #c9cfd7 20%, #d5dbe3 60%, #f1f6fb);
`;

const Group = styled.div`
  flex: none;
  display: flex;
  flex-direction: column;
  width: ${(p) => p.$width}px;
  margin-left: ${(p) => (p.$last ? 'auto' : 0)};
  border: 1px solid #94989e;
  border-radius: 3px;
  background: linear-gradient(#d4d9e0 0%, #c6ccd5 20%, #b6bdc9 21%, #cdd5de 55%, #e0e8ef 80%);
  overflow: hidden;

  .content {
    flex: 1;
    display: flex;
    padding-top: 1px;
  }

  .caption {
    flex: none;
    height: 15px;
    background: linear-gradient(#bababa, #8d8d8d);
    color: #fff;
    line-height: 15px;
    text-align: center;
    white-space: nowrap;
  }
`;

const BigButton = styled.button`
  display: flex;
  flex-direction: column;
  align-items: center;
  ${(p) => (p.$width ? `width: ${p.$width}px;` : 'flex: 1;')}
  min-width: 0;
  height: 67px;
  padding: 3px ${(p) => (p.$narrow ? 10 : 0)}px 0;
  background: ${(p) => p.$bg || 'none'};
  color: ${(p) => p.$color || '#333'};
  line-height: 13px;

  & + & {
    border-left: ${(p) => (p.$bg ? '1px solid #d8d8f0' : 'none')};
  }

  svg {
    margin-bottom: 5px;
    overflow: visible;
  }

  ${Caret} {
    margin-top: 4px;
  }
`;

const Monogram = styled.span`
  flex: none;
  width: 32px;
  height: 32px;
  margin-bottom: 5px;
  border: ${(p) => (p.$outline ? '2px solid #d8b8d8' : 'none')};
  border-radius: 4px;
  background: ${(p) => p.$color || 'none'};
  color: #e8e8e8;
  font-size: 20px;
  font-weight: 700;
  line-height: ${(p) => (p.$outline ? 28 : 32)}px;
`;

const FormGrid = styled.div`
  display: grid;
  grid-template-columns: 16px 40px 100px;
  grid-auto-rows: 20px;
  align-items: center;
  gap: 2px 3px;
  padding: 2px 0 0 4px;
`;

const Pound = styled.span`
  color: ${RED};
  font-size: 18px;
  font-weight: 700;
  line-height: 20px;
  text-align: center;
`;

const CompanyDetails = styled.div`
  display: flex;
  flex-direction: column;
  gap: 9px;
  padding: 10px 0 0 3px;
  white-space: nowrap;

  div {
    display: flex;
    align-items: center;
    gap: 2px;
    min-height: 20px;
  }

  ${SelectBox} {
    margin-left: 6px;
    gap: 0;
  }
`;

const QuickRow = styled.div`
  flex: 1;
  display: flex;
  align-items: center;
  justify-content: space-between;
  padding: 0 5px 0 6px;
  white-space: nowrap;
`;

const ToggleList = styled.div`
  flex: 1;
  display: flex;
  flex-direction: column;
  gap: 2px;
  padding: 2px 6px 0 5px;

  label {
    display: flex;
    align-items: center;
    gap: 3px;
    height: 20px;
  }

  span {
    flex: 1;
  }

  input {
    position: absolute;
    opacity: 0;
  }

  i {
    display: flex;
    align-items: center;
    justify-content: center;
    width: 18px;
    height: 18px;
    background: ${GREEN};
  }
`;

const License = styled.dl`
  display: grid;
  grid-template-columns: 90px 1fr;
  grid-auto-rows: 16px;
  padding: 8px 0 0 8px;
  color: #000;
  line-height: 16px;
`;

const DocumentTabs = styled.div`
  flex: none;
  display: flex;
  justify-content: space-between;
  height: 27px;
  padding: 3px 8px 0 3px;
  border-bottom: 1px solid #a5a5a5;

  .tab {
    display: flex;
    align-items: center;
    gap: 2px;
    height: 24px;
    padding: 0 8px;
    border: 1px solid #8a8a8a;
    border-bottom: none;
    border-radius: 4px 4px 0 0;
    background: #e6e6e6;
  }

  .controls {
    display: flex;
    align-items: center;
    gap: 10px;
    padding-bottom: 4px;
  }
`;

const Workspace = styled.main`
  flex: 1;
  display: flex;
  gap: 2px;
  min-height: 0;
  margin: 0 2px 4px 1px;
  padding: 1px 2px 2px 0;
  border: 1px solid #a5a5a5;
  border-top: none;

  .right {
    flex: 1;
    display: flex;
    flex-direction: column;
    gap: 3px;
    min-width: 0;
  }
`;

const PanelHeader = styled.div`
  flex: none;
  display: flex;
  align-items: center;
  gap: 1px;
  height: 27px;
  padding: 0 5px 0 4px;
  border: 1px solid ${(p) => (p.$dark ? '#4a4b4d' : '#7d7e80')};
  background: ${(p) =>
    p.$dark
      ? 'linear-gradient(#8a8b8d, #58595b 40%, #77787a)'
      : 'linear-gradient(#a5a7a9, #88898b 40%, #9d9ea1)'};

  h2 {
    flex: 1;
    color: #f0f0f0;
  }
`;

const panel = css`
  display: flex;
  flex-direction: column;
  min-height: 0;
  border: 1px solid #a5a5a5;
  border-top: none;
`;

const YardStyle = styled.section`
  ${panel}
  flex: none;
  width: 516px;
`;

const CollectionsStyle = styled.section`
  ${panel}
  flex: 465 1 0;
`;

const PreBookStyle = styled.section`
  ${panel}
  flex: 357 1 0;
`;

const Toolbar = styled.div`
  flex: none;
  display: flex;
  align-items: center;
  gap: 4px;
  height: 38px;
  padding: 0 3px 0 ${(p) => (p.$framed ? 8 : p.$inset ? 10 : 4)}px;
  ${(p) => p.$framed && 'margin: 1px 1px 0; border: 1px solid #c4c4c4; border-radius: 3px;'}

  ${Field} {
    margin-right: 5px;
  }
`;

const GradientButton = styled.button`
  ${steel}
  flex: none;
  display: flex;
  align-items: center;
  justify-content: space-around;
  width: ${(p) => p.$width}px;
  height: 32px;
  padding: 0 3px;
  margin-right: ${(p) => (p.$width > 100 ? 5 : 0)}px;
  white-space: nowrap;
`;

const ProcessButton = styled(GradientButton)`
  justify-content: flex-start;
  padding-left: 4px;

  span {
    flex: 1;
    text-align: center;
  }
`;

const IconButton = styled.button`
  ${steel}
  flex: none;
  display: flex;
  align-items: center;
  justify-content: center;
  width: 34px;
  height: 32px;
  ${(p) => p.$pressed && 'background: linear-gradient(#b4b7bc, #dcdee1);'}
`;

const SquareButton = styled(IconButton)`
  width: 32px;
`;

const SplitButton = styled.div`
  ${steel}
  flex: none;
  display: flex;
  width: 84px;
  height: 32px;

  button {
    display: flex;
    align-items: center;
    justify-content: center;
    gap: 3px;
    flex: 1;
  }

  button + button {
    flex: none;
    width: 16px;
    border-left: 1px solid #8a8a8a;
  }
`;

const CheckLabel = styled.label`
  display: flex;
  align-items: center;
  gap: 4px;
  margin-right: 1px;
  white-space: nowrap;
`;

const ListArea = styled.div`
  flex: 1;
  min-height: 0;
  margin: 1px 3px 3px;
  padding: 4px 3px;
  border: 1px solid #a0a0a0;
  background: #fff;
  overflow: hidden;
`;

const TicketCard = styled.article`
  width: 298px;
  height: 133px;
  margin: 1px 0 5px;
  border: ${(p) => (p.$selected ? '2px solid #000' : '1px solid #b8b8b8')};
  background: #e6e6e6;
  color: #000;

  header {
    display: flex;
    align-items: center;
    gap: 8px;
    height: 32px;
    margin: ${(p) => (p.$selected ? '0' : '-1px -1px 0')};
    padding-left: 9px;
    background: #c0c0ff;
    border: 1px solid #000;
    ${(p) => p.$selected && 'border-width: 0 0 1px;'}
  }

  h3 {
    font-weight: 700;
  }

  dl {
    display: grid;
    grid-template-columns: 48px 106px 50px 1fr;
    grid-auto-rows: 20px;
    padding: 4px 6px 0 4px;
    line-height: 20px;
    white-space: nowrap;
  }

  .wide {
    grid-column: span 3;
  }

  .number {
    text-align: right;
  }
`;

const InnerTabs = styled.div`
  flex: none;
  display: flex;
  height: 22px;
  padding: 1px 2px 0;
  border-bottom: 1px solid #a5a5a5;

  button {
    width: 68px;
    border: 1px solid #8a8a8a;
    border-bottom: none;
    border-radius: 4px 4px 0 0;
    color: #666;
  }
`;

const GridFrame = styled.div`
  flex: 1;
  display: flex;
  min-height: 0;
  margin: 1px 4px 4px;
  padding: 1px;
  border: 1px solid #a0a0a0;
  background: #fff;

  .table-area {
    flex: 1;
    min-width: 0;
    overflow: hidden;
  }
`;

const JobTable = styled.table`
  width: 100%;
  table-layout: fixed;
  border-collapse: separate;
  border-spacing: 0;

  th {
    height: 36px;
    padding: 0 2px;
    border: solid #ababab;
    border-width: 0 1px 1px 0;
    background: linear-gradient(#f6f6f6, #e2e2e2);
    font-weight: 400;
    line-height: 13px;
  }

  td {
    padding: 0 0 0 2px;
    border: solid #ccd3e4;
    border-width: 0 1px 1px 0;
    white-space: nowrap;
    overflow: hidden;
  }

  .filters td {
    height: 50px;
    border-bottom: 4px double #b0b0b0;
  }

  .filters ${Caret} {
    display: block;
    margin: 0 auto;
  }

  th ${CheckBox} {
    margin: 0 auto;
  }
`;

const JobRowStyle = styled.tr`
  background: ${(p) => (p.$selected ? '#0000ff' : '#ffffdf')};
  color: ${(p) => (p.$selected ? '#fff' : '#000')};

  td {
    height: ${(p) => p.$lines * 46 + 1}px;
  }

  .driver {
    background: #ffffdf;
  }

  .inset {
    padding: 0 0 0 7px;
  }

  .icon {
    padding: 0;
  }

  .icon > * {
    margin: 0 auto;
  }
`;

const SortedHead = styled.div`
  display: flex;
  justify-content: space-between;
  padding: 0 3px 0 12px;
`;

const Line = styled.div`
  display: flex;
  align-items: center;
  justify-content: ${(p) => (p.$center ? 'center' : 'flex-start')};
  height: 46px;
`;

const Badge = styled.span`
  display: flex;
  align-items: center;
  justify-content: center;
  width: ${(p) => (p.$large ? 24 : 22)}px;
  height: ${(p) => (p.$large ? 24 : 22)}px;
  margin: 0 auto;
  border: 2px solid #000;
  border-radius: 3px;
  background: #fff;
  color: ${(p) => (p.$large ? '#f00' : '#000')};
  font-family: 'DejaVu Sans', sans-serif;
  font-size: 14px;
  font-weight: 700;
`;

const GreyBadge = styled.span`
  width: 22px;
  height: 22px;
  border-radius: 3px;
  background: #6f6f6f;
  color: #fff;
  font-family: 'DejaVu Sans', sans-serif;
  font-size: 14px;
  font-weight: 700;
  line-height: 22px;
  text-align: center;
`;

const ScrollColumn = styled.div`
  flex: none;
  display: flex;
  flex-direction: column;
  width: 17px;
  background: #4a4a4a;

  .corner {
    height: 36px;
    background: linear-gradient(#f6f6f6, #e2e2e2);
    border-bottom: 1px solid #ababab;
  }

  button,
  .thumb {
    display: flex;
    align-items: center;
    justify-content: center;
    height: 17px;
  }

  .thumb {
    height: 48px;
    border: 1px solid #555;
    background: linear-gradient(90deg, #ececec, #bdbdbd 50%, #d8d8d8);
  }
`;

const BookingCard = styled.article`
  display: flex;
  flex-direction: column;
  width: 276px;
  height: 205px;
  border: 2px solid #000;
  background: #e6e6e6;
  color: #000;

  .top {
    display: flex;
    gap: 7px;
    padding: 1px 5px 0 2px;
  }

  .type {
    display: flex;
    align-items: center;
    justify-content: center;
    width: 40px;
    height: 40px;
    background: #c0c0ff;
  }

  .details {
    flex: 1;
    height: 100px;
  }

  p {
    display: flex;
    justify-content: space-between;
    line-height: 20px;
    white-space: nowrap;
  }

  .heading {
    line-height: 18px;
    font-weight: 700;
  }

  .gt {
    justify-content: flex-start;
    gap: 14px;
  }

  strong {
    color: #008000;
  }

  time {
    color: #f00;
  }

  .lines {
    flex: 1;
    margin: 0 1px 1px 2px;
    padding: 1px;
    border: 1px solid #a0a0a0;
    background: #fff;
  }

  table {
    width: 100%;
    table-layout: fixed;
    border-collapse: separate;
    border-spacing: 0;
  }

  th,
  td {
    height: 20px;
    padding: 0 0 0 3px;
    text-align: left;
    white-space: nowrap;
    overflow: hidden;
  }

  th {
    border: solid #ababab;
    border-width: 0 1px 1px 0;
    background: linear-gradient(#fff, #e6e6e6);
    color: #333;
    font-weight: 400;
  }

  td {
    background: #7b96e0;
    color: #fff;
  }
`;

const StatusBarStyle = styled.footer`
  flex: none;
  display: flex;
  align-items: center;
  height: 26px;
  padding-left: 3px;
  border-bottom: 2px solid #26261f;
  background: linear-gradient(#5a5f6b, #3d414a 35%, #292b2e 40%, #3a3c42);
  color: #fff;
  white-space: nowrap;

  .session {
    margin-right: 7px;
  }

  strong {
    margin-left: 6px;
    color: #f00;
  }

  .tray {
    display: flex;
    align-items: center;
    height: 100%;
    margin-left: auto;
    border-left: 1px solid #222;
    background: linear-gradient(#a2a2a2, #6a6a6a);
    color: #b4b4b4;
  }

  .links {
    display: flex;
    align-items: center;
    gap: 7px;
    padding: 0 6px 0 8px;
    color: #000;
  }

  .tray > span {
    padding: 4px 5px;
    border-left: 1px solid #222;
  }
`;
